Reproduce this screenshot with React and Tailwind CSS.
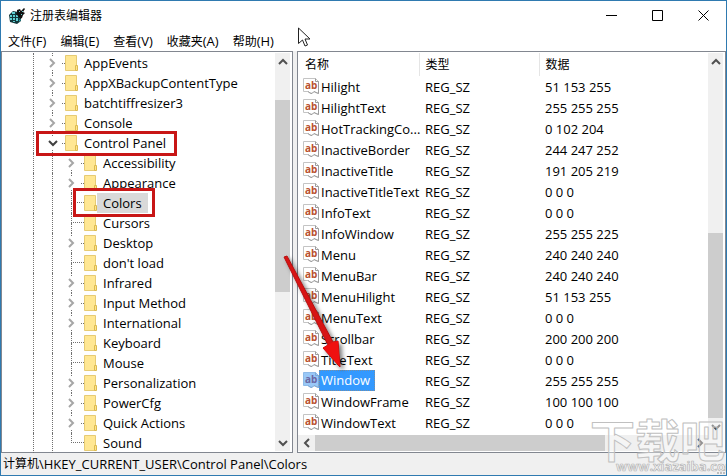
import React from "react";

const registryTree = [
  { name: "AppEvents", depth: 0, state: "closed" },
  { name: "AppXBackupContentType", depth: 0, state: "closed" },
  { name: "batchtiffresizer3", depth: 0, state: "closed" },
  { name: "Console", depth: 0, state: "closed" },
  { name: "Control Panel", depth: 0, state: "open" },
  { name: "Accessibility", depth: 1, state: "closed" },
  { name: "Appearance", depth: 1, state: "closed" },
  { name: "Colors", depth: 1, selected: true },
  { name: "Cursors", depth: 1 },
  { name: "Desktop", depth: 1, state: "closed" },
  { name: "don't load", depth: 1 },
  { name: "Infrared", depth: 1, state: "closed" },
  { name: "Input Method", depth: 1, state: "closed" },
  { name: "International", depth: 1, state: "closed" },
  { name: "Keyboard", depth: 1 },
  { name: "Mouse", depth: 1 },
  { name: "Personalization", depth: 1, state: "closed" },
  { name: "PowerCfg", depth: 1, state: "closed" },
  { name: "Quick Actions", depth: 1, state: "closed" },
  { name: "Sound", depth: 1, last: true },
];

const registryValues = [
  ["Hilight", "51 153 255"],
  ["HilightText", "255 255 255"],
  ["HotTrackingCo...", "0 102 204"],
  ["InactiveBorder", "244 247 252"],
  ["InactiveTitle", "191 205 219"],
  ["InactiveTitleText", "0 0 0"],
  ["InfoText", "0 0 0"],
  ["InfoWindow", "255 255 225"],
  ["Menu", "240 240 240"],
  ["MenuBar", "240 240 240"],
  ["MenuHilight", "51 153 255"],
  ["MenuText", "0 0 0"],
  ["Scrollbar", "200 200 200"],
  ["TitleText", "0 0 0"],
  ["Window", "255 255 255"],
  ["WindowFrame", "100 100 100"],
  ["WindowText", "0 0 0"],
];

const selectedValue = "Window";

const menus = [
  ["文件", "(F)"],
  ["编辑", "(E)"],
  ["查看", "(V)"],
  ["收藏夹", "(A)"],
  ["帮助", "(H)"],
];

function AppIcon() {
  return (
    <svg width="17" height="16" viewBox="0 0 17 16" className="shrink-0" aria-hidden="true">
      <path d="M0 7l4-4 5 1 3 4v5l-4 3-7-2z" fill="#12383c" />
      <path d="M1 7h2v2H1zM4 7h2v2H4zM1 10h2v2H1zM4 10h2v2H4zM3 4h3v2H3zM7 7h2v2H7zM7 10h2v3H7zM4 13h2v1H4z" fill="#5fd0d3" />
      <path d="M10 9l2-1v2l-2 1zM10 12l2-1v1l-2 2z" fill="#239ca3" />
      <path d="M8 2l3-1 1 2 3-3 1 1-2 3 2 1-2 2-1 3-2 1-2-3-2-2 1-1z" fill="#111" />
      <path d="M10 3h1v1h-1zM13 3h1v1h-1zM12 6h1v1h-1z" fill="#5ccfd2" />
    </svg>
  );
}

function Chevron({ dir, tone = "#505050" }) {
  const shapes = {
    up: "M1 7l4-4 4 4",
    down: "M1 3l4 4 4-4",
    left: "M7 1L3 5l4 4",
    right: "M2 1l4 4-4 4",
  };
  return (
    <svg width="10" height="10" viewBox="0 0 10 10" className="shrink-0" aria-hidden="true">
      <path d={shapes[dir]} fill="none" stroke={tone} strokeWidth="2" />
    </svg>
  );
}

function Folder() {
  return (
    <svg width="13" height="16" viewBox="0 0 13 16" className="shrink-0" aria-hidden="true">
      <path d="M.5.5h11v15H.5z" fill="#ffe793" stroke="#e6cb74" />
      <path d="M10.5 15.5v-5h2v5z" fill="#ffe48a" stroke="#dcba50" />
    </svg>
  );
}

function StringIcon({ selected }) {
  return (
    <svg width="16" height="17" viewBox="0 0 16 17" className="shrink-0" aria-hidden="true">
      <path
        d="M.5.5H12.500L15.500 3.500V15.500L13 14.500L11 13.500L9 15.500L7 15L5 13.500H.5z"
        fill={selected ? "#99c8f7" : "#fff"}
        stroke={selected ? "#8fbbe8" : "#c4c4c4"}
      />
      <path
        d="M12.500.5V3.500H15.500V15.500L13 14.500L11 13.500L9 15.500L7 15L5 13.500"
        fill="none"
        stroke={selected ? "#7fa9d4" : "#9c9c9c"}
      />
      <text
        x="2"
        y="11"
        fontSize="10"
        fontWeight="700"
        fontFamily="Open Sans, sans-serif"
        fill={selected ? "#6b67a3" : "#b9512f"}
      >
        ab
      </text>
    </svg>
  );
}

function GuideCell() {
  return (
    <span className="flex h-full w-[19px] shrink-0 pl-[9px]">
      <span className="border-l border-dotted border-[#707070]" />
    </span>
  );
}

function ExpanderCell({ open }) {
  return (
    <>
      <span className="flex h-full w-[19px] shrink-0 flex-col items-center justify-between">
        <span className="h-[3px] border-l border-dotted border-[#707070]" />
        <Chevron dir={open ? "down" : "right"} tone={open ? "#404040" : "#a6a6a6"} />
        <span className="h-[3px] border-l border-dotted border-[#707070]" />
      </span>
      <span className="w-[3px] shrink-0 border-t border-dotted border-[#707070]" />
    </>
  );
}

function LeafCell({ last }) {
  return (
    <span className="flex h-full w-[22px] shrink-0 flex-col pl-[9px]">
      <span className="h-1/2 border-b border-l border-dotted border-[#707070]" />
      {!last && <span className="h-1/2 border-l border-dotted border-[#707070]" />}
    </span>
  );
}

function TreeRow({ item }) {
  return (
    <li className="flex h-5 items-center pl-[22px]">
      <GuideCell />
      {item.depth === 1 && <GuideCell />}
      {item.state ? <ExpanderCell open={item.state === "open"} /> : <LeafCell last={item.last} />}
      <Folder />
      <span className={item.selected ? "bg-[#d9d9d9] px-1.5" : "px-1.5"}>{item.name}</span>
    </li>
  );
}

function ArrowButton({ dir, label }) {
  return (
    <button type="button" aria-label={label} className="flex h-[17px] w-[15px] shrink-0 items-center justify-center">
      <Chevron dir={dir} />
    </button>
  );
}

function WindowButton({ label, children }) {
  return (
    <button type="button" aria-label={label} className="flex h-full w-[46px] items-center justify-center">
      <svg width="11" height="11" viewBox="0 0 11 11" fill="none" stroke="#000" aria-hidden="true">
        {children}
      </svg>
    </button>
  );
}

function TreePane() {
  return (
    <section className="flex w-[292px] shrink-0 border border-[#828790] bg-white py-px pr-[2px]">
      <ul className="min-w-0 grow">
        {registryTree.map((item) => (
          <TreeRow key={item.name} item={item} />
        ))}
      </ul>
      <div className="flex w-[15px] shrink-0 flex-col bg-[#f0f0f0]">
        <ArrowButton dir="up" label="Scroll tree up" />
        <div className="grow-[30] basis-0" />
        <div className="grow-[192] basis-0 bg-[#cdcdcd]" />
        <div className="grow-[142] basis-0" />
        <ArrowButton dir="down" label="Scroll tree down" />
      </div>
    </section>
  );
}

function ValuesTable() {
  return (
    <table className="w-full table-fixed border-collapse text-left">
      <colgroup>
        <col className="w-[121px]" />
        <col className="w-[120px]" />
        <col />
      </colgroup>
      <thead>
        <tr className="h-[23px] text-xs leading-5">
          <th className="border-r border-[#e5e5e5] p-0 pl-[7px] font-normal">名称</th>
          <th className="border-r border-[#e5e5e5] p-0 pl-1.5 font-normal">类型</th>
          <th className="p-0 pl-1.5 font-normal">数据</th>
        </tr>
      </thead>
      <tbody>
        {registryValues.map(([name, data]) => {
          const selected = name === selectedValue;
          return (
            <tr key={name} className="h-[21px]">
              <td className="p-0 pl-[5px]">
                <div className="flex h-[21px] items-center whitespace-nowrap">
                  <StringIcon selected={selected} />
                  <span
                    className={
                      selected
                        ? "border border-dotted border-[#7a8ea0] bg-[#3399ff] pr-1 pl-px leading-[19px] text-white"
                        : "pl-[2px]"
                    }
                  >
                    {name}
                  </span>
                </div>
              </td>
              <td className="p-0 pl-1.5">REG_SZ</td>
              <td className="p-0 pl-1.5">{data}</td>
            </tr>
          );
        })}
      </tbody>
    </table>
  );
}

function ValuesPane() {
  return (
    <section className="flex min-w-0 grow flex-col border border-[#828790] bg-white py-px pr-[2px]">
      <div className="flex min-h-0 grow">
        <div className="min-w-0 grow">
          <ValuesTable />
        </div>
        <div className="flex w-[15px] shrink-0 flex-col bg-[#f0f0f0]">
          <ArrowButton dir="up" label="Scroll values up" />
          <div className="grow-[163] basis-0" />
          <div className="grow-[184] basis-0 bg-[#cdcdcd]" />
          <ArrowButton dir="down" label="Scroll values down" />
        </div>
      </div>
      <div className="flex h-4 shrink-0 items-center bg-[#f0f0f0] pr-[15px] pl-px">
        <ArrowButton dir="left" label="Scroll values left" />
        <div className="ml-px h-full grow-[289] basis-0 bg-[#cdcdcd]" />
        <div className="grow-[88] basis-0" />
        <ArrowButton dir="right" label="Scroll values right" />
      </div>
    </section>
  );
}

function Annotations() {
  return (
    <div className="pointer-events-none absolute top-0 left-0">
      <div className="absolute top-[130px] left-[35px] h-[25px] w-[141px] border-3 border-[#c81616]" />
      <div className="absolute top-[187px] left-[72px] h-[29px] w-[82px] border-3 border-[#c81616]" />
      <svg width="80" height="130" viewBox="0 0 80 130" className="absolute top-[248px] left-[274px] drop-shadow-[3px_3px_2px_rgba(0,0,0,0.5)]" aria-hidden="true">
        <path d="M9 8L12 7L58 93L63 92L65 118L48 99L53 96z" fill="#d81414" stroke="#b80e0e" strokeWidth="1" strokeLinejoin="round" />
        <path d="M53 96L58 93L63 92L65 118L48 99z" fill="#f01010" />
      </svg>
      <svg width="14" height="21" viewBox="0 0 14 21" className="absolute top-[26px] left-[297px]" aria-hidden="true">
        <path d="M.5 1v15.500l4-3.500 2.500 6 2.500-1-2.500-6h5z" fill="#fff" stroke="#222" />
      </svg>
    </div>
  );
}

function Watermark() {
  return (
    <svg
      width="138"
      height="70"
      viewBox="0 0 138 70"
      className="pointer-events-none absolute right-0 bottom-0"
      fontFamily="Noto Sans CJK SC, sans-serif"
      fontWeight="700"
      strokeLinejoin="round"
    >
      <text x="2" y="53" fontSize="45" fill="#fff" fillOpacity="0.4" stroke="#c0c0c0" strokeWidth="1">
        下载吧
      </text>
      <text
        x="28"
        y="66"
        fontSize="13"
        fontFamily="Open Sans, sans-serif"
        fontWeight="700"
        fill="#f4f4f4"
        stroke="#b4b4b4"
        strokeWidth="0.7"
      >
        www.xiazaiba.com
      </text>
    </svg>
  );
}

function ResizeGrip() {
  return (
    <svg width="10" height="10" viewBox="0 0 10 10" fill="#bdbdbd" aria-hidden="true">
      <path d="M7 1h2v2H7zM4 4h2v2H4zM7 4h2v2H7zM1 7h2v2H1zM4 7h2v2H4zM7 7h2v2H7z" />
    </svg>
  );
}

export default function App() {
  return (
    <main className="relative flex h-screen flex-col overflow-hidden border border-[#2f7ab0] bg-white font-['Open_Sans','Noto_Sans_CJK_SC',sans-serif] text-[13px] leading-5 text-black">
      <header className="flex h-[29px] shrink-0 items-center pl-2 text-xs">
        <AppIcon />
        <h1 className="ml-1 grow">注册表编辑器</h1>
        <WindowButton label="Minimize">
          <path d="M0 5.500h11" />
        </WindowButton>
        <WindowButton label="Maximize">
          <path d="M.5.500h10v10H.5z" />
        </WindowButton>
        <WindowButton label="Close">
          <path d="M.5.500l10 10M10.500.500l-10 10" />
        </WindowButton>
      </header>
      <nav className="flex h-[21px] shrink-0 items-center gap-3.5 px-[7px]">
        {menus.map(([label, key]) => (
          <button key={label} type="button">
            <span className="text-xs">{label}</span>
            {key}
          </button>
        ))}
      </nav>
      <div className="flex min-h-0 grow gap-1 bg-[#f0f0f0]">
        <TreePane />
        <ValuesPane />
      </div>
      <footer className="flex h-[22px] shrink-0 items-center bg-[#f0f0f0] pl-[2px]">
        <span className="text-xs">计算机</span>
        <span className="grow">\HKEY_CURRENT_USER\Control Panel\Colors</span>
        <span className="self-end">
          <ResizeGrip />
        </span>
      </footer>
      <Annotations />
      <Watermark />
    </main>
  );
}
